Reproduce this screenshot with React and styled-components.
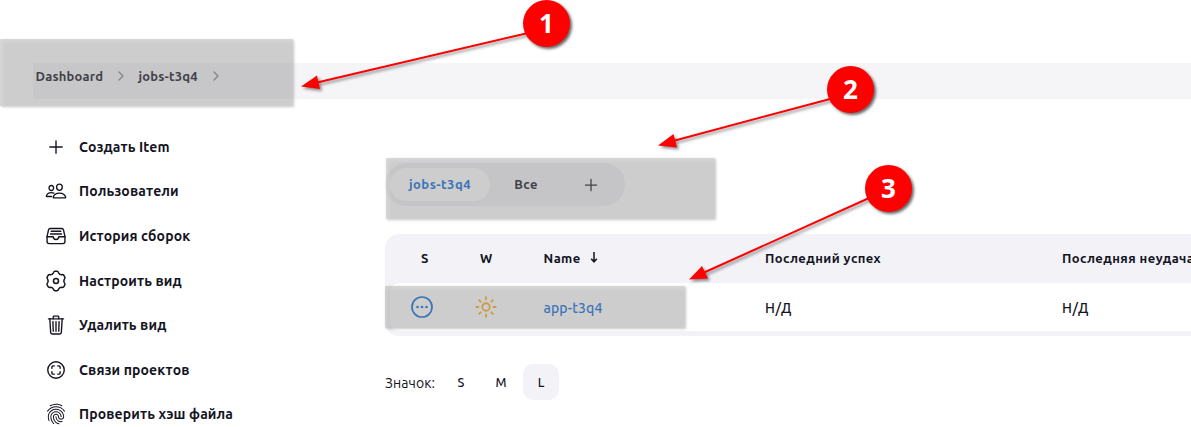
import React from "react";
import styled, { createGlobalStyle } from "styled-components";
import {
  IoAddOutline,
  IoPeopleOutline,
  IoFileTrayFullOutline,
  IoTrashOutline,
  IoScanCircleOutline,
  IoFingerPrintOutline,
  IoSunnyOutline,
  IoChevronForward,
} from "react-icons/io5";

const Global = createGlobalStyle`
  *, *::before, *::after { box-sizing: border-box; }
  html, body { margin: 0; background: #fff; overflow: hidden; }
  body { font-family: Ubuntu, "Noto Sans", sans-serif; font-size: 14px; color: #14141f; }
`;

const Page = styled.div`
  position: relative;
  width: 1191px;
  height: 427px;
  overflow: hidden;
  padding-top: 63px;
`;

const Breadcrumbs = styled.nav`
  height: 36px;
  margin-left: 33px;
  padding: 0 0 11px 2.5px;
  background: #f5f5f8;
  display: flex;
  align-items: center;
`;

const Crumb = styled.span`
  width: ${(p) => p.$width}px;
  font-size: 13px;
  font-weight: 600;
  letter-spacing: 0.18px;
  white-space: nowrap;
`;

const Separator = styled(IoChevronForward)`
  width: 14px;
  height: 14px;
  margin: 0 ${(p) => p.$after}px 0 10.5px;
  color: #85858f;
`;

const Body = styled.div`
  display: flex;
`;

const Sidebar = styled.aside`
  width: 385px;
  flex: none;
  padding: 25.6px 0 0 45px;
`;

const Task = styled.div`
  height: 44.6px;
  display: flex;
  align-items: center;
  gap: 12px;
  font-weight: 600;
  letter-spacing: 0.12px;
  white-space: nowrap;

  svg {
    width: 22px;
    height: 22px;
    flex: none;
  }
`;

const Main = styled.main`
  flex: 1;
  min-width: 0;
  padding-top: 64px;
`;

const Tabs = styled.div`
  width: 240px;
  height: 43px;
  padding: 5px;
  border-radius: 22px;
  background: #f2f2f7;
  display: flex;
`;

const Tab = styled.div`
  width: ${(p) => p.$width}px;
  height: 33px;
  padding-bottom: ${(p) => (p.$icon ? 0 : 2)}px;
  border-radius: 17px;
  display: flex;
  align-items: center;
  justify-content: center;
  font-size: 13px;
  font-weight: 700;
  letter-spacing: ${(p) => p.$spacing || 0}px;
  background: ${(p) => (p.$active ? "#fff" : "transparent")};
  color: ${(p) => (p.$active ? "#0a6cdc" : "inherit")};

  svg {
    width: 20px;
    height: 20px;
  }
`;

const Table = styled.div`
  width: 900px;
  height: 102px;
  margin-top: 28px;
  padding: 0 5px 5px;
  border-radius: 14px;
  background: #f2f2f7;
`;

const Row = styled.div`
  display: grid;
  grid-template-columns: 70px 62px 243px 297px 1fr;
  align-items: center;
  white-space: nowrap;
`;

const HeadRow = styled(Row)`
  height: 49px;
  padding-bottom: 2px;
  font-size: 13px;
  font-weight: 700;
  letter-spacing: 0.43px;
`;

const BodyRow = styled(Row)`
  height: 48px;
  border-radius: 9px;
  background: #fff;
  font-weight: 500;
`;

const Cell = styled.div`
  display: flex;
  align-items: center;
  gap: 9px;
  padding-left: ${(p) => p.$indent || 0}px;
`;

const Value = styled.span`
  padding-top: 2px;
  letter-spacing: ${(p) => p.$spacing}px;
  color: ${(p) => (p.$link ? "#0a6cdc" : "inherit")};
`;

const Sun = styled(IoSunnyOutline)`
  width: 24px;
  height: 24px;
  color: #fbab20;

  * {
    stroke-width: 38px;
  }
`;

const IconSizes = styled.div`
  margin-top: 28px;
  height: 36px;
  display: flex;
  align-items: center;
`;

const SizeLabel = styled.span`
  width: 58px;
  padding-top: 1px;
  letter-spacing: 0.1px;
`;

const Size = styled.span`
  width: 36px;
  height: 36px;
  margin-right: 4px;
  border-radius: 10px;
  display: flex;
  align-items: center;
  justify-content: center;
  font-size: 12.5px;
  font-weight: 500;
  background: ${(p) => (p.$active ? "#f2f2f7" : "transparent")};
`;

const Highlight = styled.div`
  position: absolute;
  left: ${(p) => p.$x}px;
  top: ${(p) => p.$y}px;
  width: ${(p) => p.$w}px;
  height: ${(p) => p.$h}px;
  border-radius: 1px;
  background: rgba(130, 130, 130, 0.4);
  box-shadow: 1px 1px 3px rgba(0, 0, 0, 0.22), inset 2px 2px 5px rgba(255, 255, 255, 0.25);
`;

const Arrows = styled.svg`
  position: absolute;
  inset: 0;
  filter: drop-shadow(2px 2px 1.5px rgba(0, 0, 0, 0.45));
`;

const Badge = styled.div`
  position: absolute;
  left: ${(p) => p.$x}px;
  top: ${(p) => p.$y}px;
  width: 47px;
  height: 47px;
  border-radius: 50%;
  background: #fe0000;
  box-shadow: 2px 2px 3px rgba(0, 0, 0, 0.6);
  color: #fff;
  font: 700 26px/47px "Open Sans", sans-serif;
  text-align: center;
`;

const polar = (degrees, radius) => {
  const t = ((degrees - 90) * Math.PI) / 180;
  return `${(256 + radius * Math.cos(t)).toFixed(1)} ${(256 + radius * Math.sin(t)).toFixed(1)}`;
};

const gearOutline =
  [0, 60, 120, 180, 240, 300]
    .map(
      (a, i) =>
        `${i ? "L" : "M"}${polar(a - 19, 196)} Q${polar(a - 13, 226)} ${polar(a - 6, 226)} ` +
        `L${polar(a + 6, 226)} Q${polar(a + 13, 226)} ${polar(a + 19, 196)} ` +
        `Q${polar(a + 30, 172)} ${polar(a + 41, 196)}`
    )
    .join(" ") + "Z";

const Gear = () => (
  <svg viewBox="0 0 512 512" fill="none" stroke="currentColor" strokeWidth="35" strokeLinejoin="round">
    <path d={gearOutline} />
    <circle cx="256" cy="256" r="58" />
  </svg>
);

const NotBuilt = () => (
  <svg width="22" height="22" viewBox="0 0 22 22" fill="#0a6cdc">
    <circle cx="11" cy="11" r="10" fill="none" stroke="#0a6cdc" strokeWidth="1.7" />
    <circle cx="6.5" cy="11" r="1.3" />
    <circle cx="11" cy="11" r="1.3" />
    <circle cx="15.5" cy="11" r="1.3" />
  </svg>
);

const SortArrow = () => (
  <svg width="8" height="11" viewBox="0 0 8 11" fill="none" stroke="#14141f" strokeWidth="1.5">
    <path d="M4 0V9.5M1.2 6.8L4 9.8L6.8 6.8" />
  </svg>
);

const tasks = [
  [IoAddOutline, "Создать Item"],
  [IoPeopleOutline, "Пользователи"],
  [IoFileTrayFullOutline, "История сборок"],
  [Gear, "Настроить вид"],
  [IoTrashOutline, "Удалить вид"],
  [IoScanCircleOutline, "Связи проектов"],
  [IoFingerPrintOutline, "Проверить хэш файла"],
];

const arrows = [
  { line: "M526 33.5 L317 82.5", head: "301,86.5 317,75.5 320,89" },
  { line: "M830 99 L673 141", head: "658,145.5 673.5,134 677,147.5" },
  { line: "M868 198.5 L703 273", head: "689,279.5 702,266 708,278.5" },
];

export default function App() {
  return (
    <Page>
      <Global />
      <Breadcrumbs>
        <Crumb $width={68}>Dashboard</Crumb>
        <Separator $after={10.5} />
        <Crumb $width={60}>jobs-t3q4</Crumb>
        <Separator $after={0} />
      </Breadcrumbs>
      <Body>
        <Sidebar>
          {tasks.map(([Icon, label]) => (
            <Task key={label}>
              <Icon />
              {label}
            </Task>
          ))}
        </Sidebar>
        <Main>
          <Tabs>
            <Tab $active $width={100} $spacing={0.5}>jobs-t3q4</Tab>
            <Tab $width={72} $spacing={0.3}>Все</Tab>
            <Tab $icon $width={58}><IoAddOutline /></Tab>
          </Tabs>
          <Table>
            <HeadRow>
              <Cell $indent={31}>S</Cell>
              <Cell $indent={20}>W</Cell>
              <Cell $indent={21.5}>Name <SortArrow /></Cell>
              <Cell>Последний успех</Cell>
              <Cell>Последняя неудача</Cell>
            </HeadRow>
            <BodyRow>
              <Cell $indent={21}><NotBuilt /></Cell>
              <Cell $indent={14}><Sun /></Cell>
              <Cell $indent={21.5}><Value $link $spacing={0.1}>app-t3q4</Value></Cell>
              <Cell><Value $spacing={0.6}>Н/Д</Value></Cell>
              <Cell><Value $spacing={0.6}>Н/Д</Value></Cell>
            </BodyRow>
          </Table>
          <IconSizes>
            <SizeLabel>Значок:</SizeLabel>
            <Size>S</Size>
            <Size>M</Size>
            <Size $active>L</Size>
          </IconSizes>
        </Main>
      </Body>
      <Highlight $x={0} $y={39} $w={293} $h={67} />
      <Highlight $x={386} $y={158} $w={329} $h={61} />
      <Highlight $x={385} $y={286} $w={300} $h={42} />
      <Arrows width="1191" height="427">
        {arrows.map((a) => (
          <g key={a.line} fill="#fe0000">
            <path d={a.line} stroke="#fe0000" strokeWidth="2" />
            <polygon points={a.head} />
          </g>
        ))}
      </Arrows>
      <Badge $x={523} $y={0}>1</Badge>
      <Badge $x={827} $y={66}>2</Badge>
      <Badge $x={865} $y={165}>3</Badge>
    </Page>
  );
}
